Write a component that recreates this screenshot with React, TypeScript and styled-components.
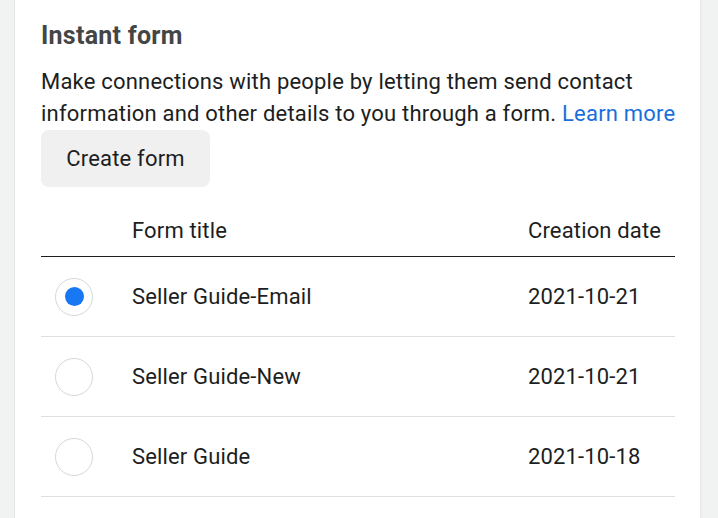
import React from "react";
import styled, { createGlobalStyle } from "styled-components";

const Global = createGlobalStyle`
  html, body { margin: 0; padding: 0; height: 100%; }
  body { background: #f1f2f2; font-family: Roboto, "Liberation Sans", sans-serif; }
  #root { height: 100%; }
`;

const Page = styled.div`
  display: flex;
  height: 518px;
  padding: 0 18px 0 15px;
  box-sizing: border-box;
  overflow: hidden;
`;

const Card = styled.div`
  flex: 1;
  background: #ffffff;
  padding: 21px 25px 0 26px;
  box-shadow: -1px 0 0 #e4e6e6, 1px 0 2px rgba(0, 0, 0, 0.06);
  box-sizing: border-box;
`;

const Title = styled.h2`
  margin: 0 0 15px;
  font-size: 25px;
  line-height: 30px;
  font-weight: 700;
  letter-spacing: 0.25px;
  color: #444546;
`;

const Description = styled.p`
  margin: 0 -10px 0 0;
  font-size: 22px;
  line-height: 32px;
  letter-spacing: 0.2px;
  color: #1c1e21;
`;

const Link = styled.a`
  color: #1a6fdb;
  text-decoration: none;
  white-space: nowrap;
`;

const Button = styled.button`
  display: block;
  width: 169px;
  height: 57px;
  border: none;
  border-radius: 8px;
  background: #f0f0f0;
  font-family: inherit;
  font-size: 22px;
  letter-spacing: 0.2px;
  color: #1c1e21;
  cursor: pointer;
  padding: 0;
`;

const Table = styled.div`
  display: flex;
  flex-direction: column;
`;

const Row = styled.div<{ $header?: boolean }>`
  display: grid;
  grid-template-columns: 91px 1fr 147px;
  align-items: ${(p) => (p.$header ? "end" : "center")};
  height: ${(p) => (p.$header ? "70px" : "80px")};
  padding-bottom: ${(p) => (p.$header ? "14px" : "0")};
  box-sizing: border-box;
  border-bottom: 1px solid ${(p) => (p.$header ? "#1c1e21" : "#dddfe1")};
  font-size: 22px;
  line-height: 22px;
  letter-spacing: 0.15px;
  color: #1c1e21;
`;

const Cell = styled.div`
  white-space: nowrap;
`;

const Radio = styled.span<{ $checked?: boolean }>`
  display: flex;
  align-items: center;
  justify-content: center;
  width: 38px;
  height: 38px;
  margin-left: 14px;
  border-radius: 50%;
  border: 1px solid #d6d8da;
  box-sizing: border-box;
  background: #fff;
  &::after {
    content: "";
    display: ${(p) => (p.$checked ? "block" : "none")};
    width: 19px;
    height: 19px;
    border-radius: 50%;
    background: #1877f2;
  }
`;

const forms = [
  { title: "Seller Guide-Email", date: "2021-10-21", checked: true },
  { title: "Seller Guide-New", date: "2021-10-21", checked: false },
  { title: "Seller Guide", date: "2021-10-18", checked: false },
];

export default function App() {
  return (
    <>
      <Global />
      <Page>
        <Card>
          <Title>Instant form</Title>
          <Description>
            Make connections with people by letting them send contact
            information and other details to you through a form.{" "}
            <Link href="#">Learn more</Link>
          </Description>
          <Button>Create form</Button>
          <Table>
            <Row $header>
              <Cell />
              <Cell>Form title</Cell>
              <Cell>Creation date</Cell>
            </Row>
            {forms.map((f) => (
              <Row key={f.title}>
                <Cell>
                  <Radio $checked={f.checked} />
                </Cell>
                <Cell>{f.title}</Cell>
                <Cell>{f.date}</Cell>
              </Row>
            ))}
          </Table>
        </Card>
      </Page>
    </>
  );
}
